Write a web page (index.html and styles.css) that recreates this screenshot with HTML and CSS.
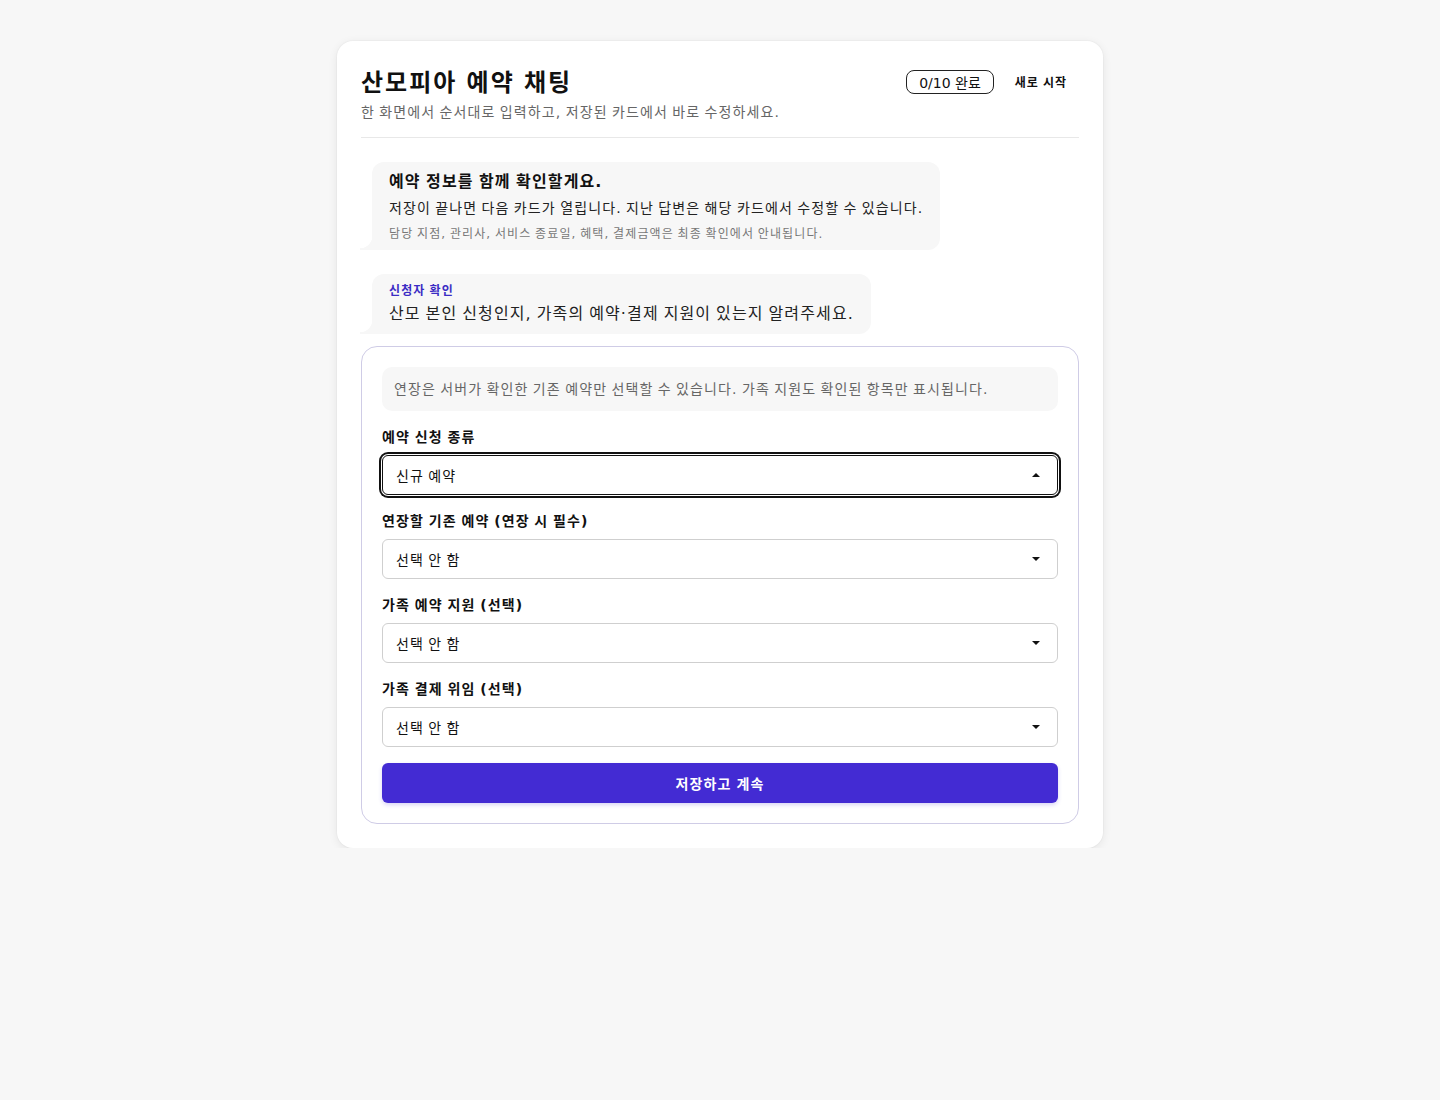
FILE: index.html
```html
<!DOCTYPE html>
<html>
<head>
<meta charset="utf-8">
<title>산모피아 예약 채팅</title>
<link rel="stylesheet" href="styles.css">
</head>
<body>
<main class="card">
  <header class="header">
    <div class="header-text">
      <h1 class="title">산모피아 예약 채팅</h1>
      <p class="subtitle">한 화면에서 순서대로 입력하고, 저장된 카드에서 바로 수정하세요.</p>
    </div>
    <div class="header-actions">
      <span class="pill">0/10 완료</span>
      <button class="reset">새로 시작</button>
    </div>
  </header>

  <section class="chat">
    <div class="bubble">
      <p class="bubble-title">예약 정보를 함께 확인할게요.</p>
      <p class="bubble-body">저장이 끝나면 다음 카드가 열립니다. 지난 답변은 해당 카드에서 수정할 수 있습니다.</p>
      <p class="bubble-note">담당 지점, 관리사, 서비스 종료일, 혜택, 결제금액은 최종 확인에서 안내됩니다.</p>
    </div>
    <div class="bubble">
      <p class="bubble-label">신청자 확인</p>
      <p class="bubble-question">산모 본인 신청인지, 가족의 예약·결제 지원이 있는지 알려주세요.</p>
    </div>

    <form class="form-card">
      <div class="info">연장은 서버가 확인한 기존 예약만 선택할 수 있습니다. 가족 지원도 확인된 항목만 표시됩니다.</div>
      <div class="field">
        <label class="label">예약 신청 종류</label>
        <div class="select focused"><span>신규 예약</span><i class="arrow up"></i></div>
      </div>
      <div class="field">
        <label class="label">연장할 기존 예약 (연장 시 필수)</label>
        <div class="select"><span>선택 안 함</span><i class="arrow"></i></div>
      </div>
      <div class="field">
        <label class="label">가족 예약 지원 (선택)</label>
        <div class="select"><span>선택 안 함</span><i class="arrow"></i></div>
      </div>
      <div class="field">
        <label class="label">가족 결제 위임 (선택)</label>
        <div class="select"><span>선택 안 함</span><i class="arrow"></i></div>
      </div>
      <button type="button" class="submit">저장하고 계속</button>
    </form>
  </section>
</main>
</body>
</html>
```

FILE: styles.css
```css
* { box-sizing: border-box; }
html, body { margin: 0; padding: 0; }
body {
  background: #f7f7f7;
  font-family: "DejaVu Sans", "Noto Sans CJK KR", sans-serif;
  letter-spacing: 0.07em;
  word-spacing: -0.08em;
  color: #111;
  padding-top: 41px;
}
p { margin: 0; }
.card {
  width: 766px;
  margin: 0 auto;
  background: #fff;
  border-radius: 16px;
  padding: 26px 24px 24px;
  box-shadow: 0 2px 10px rgba(0,0,0,0.08), 0 0 0 1px rgba(0,0,0,0.02);
}
.header {
  display: flex;
  justify-content: space-between;
  align-items: flex-start;
  padding-bottom: 15px;
  border-bottom: 1px solid #e8e8e8;
}
.title {
  margin: 0;
  font-size: 24px;
  line-height: 32px;
  font-weight: 600;
  letter-spacing: 0.085em;
  color: #111;
}
.subtitle {
  margin-top: 3px;
  font-size: 14px;
  line-height: 20px;
  color: #666;
}
.header-actions {
  display: flex;
  align-items: center;
  gap: 9px;
  margin-top: 2px;
}
.pill {
  display: inline-flex;
  align-items: center;
  height: 24px;
  padding: 0 12px;
  border: 1px solid #222;
  border-radius: 8px;
  font-size: 14px;
  letter-spacing: 0;
  word-spacing: 0;
  color: #111;
}
.reset {
  border: none;
  background: none;
  font-family: inherit;
  font-size: 12px;
  font-weight: 700;
  letter-spacing: 0.08em;
  word-spacing: -0.08em;
  color: #111;
  padding: 4px 12px;
  cursor: pointer;
}
.chat {
  padding-top: 24px;
  display: flex;
  flex-direction: column;
  align-items: flex-start;
}
.bubble {
  position: relative;
  margin-left: 11px;
  background: #f7f7f7;
  border-radius: 12px 12px 12px 0;
  padding: 9px 17px 7px 17px;
  margin-bottom: 24px;
}
.bubble::before {
  content: "";
  position: absolute;
  left: -12px;
  bottom: 0;
  width: 12px;
  height: 14px;
  background: radial-gradient(circle at 0 0, transparent 12px, #f7f7f7 12.5px);
}
.bubble + .bubble {
  margin-bottom: 12px;
  padding: 8px 17px 8px 17px;
}
.bubble-title {
  font-size: 16px;
  line-height: 22px;
  font-weight: 700;
  color: #111;
}
.bubble-body {
  margin-top: 4px;
  font-size: 14px;
  line-height: 22px;
  color: #222;
}
.bubble-note {
  margin-top: 6px;
  font-size: 12px;
  line-height: 18px;
  color: #777;
}
.bubble-label {
  font-size: 12px;
  line-height: 18px;
  font-weight: 700;
  color: #3b2cc4;
}
.bubble-question {
  margin-top: 2px;
  font-size: 16px;
  line-height: 24px;
  color: #222;
}
.form-card {
  align-self: stretch;
  border: 1px solid #cfcce6;
  border-radius: 16px;
  padding: 20px;
  display: flex;
  flex-direction: column;
  gap: 16px;
}
.info {
  background: #f7f7f7;
  border-radius: 10px;
  padding: 12px 12px;
  font-size: 14px;
  line-height: 20px;
  color: #666;
}
.field {
  display: flex;
  flex-direction: column;
  gap: 8px;
}
.label {
  font-size: 14px;
  line-height: 20px;
  font-weight: 700;
  color: #111;
}
.select {
  height: 40px;
  border: 1px solid #cfcfcf;
  border-radius: 6px;
  background: #fff;
  display: flex;
  align-items: center;
  justify-content: space-between;
  padding: 0 17px 0 13px;
  font-size: 14px;
  color: #111;
}
.select.focused {
  border: 1px solid #111;
  box-shadow: 0 0 0 1px #fff, 0 0 0 3px #111;
}
.arrow {
  width: 0;
  height: 0;
  border-left: 4px solid transparent;
  border-right: 4px solid transparent;
  border-top: 4px solid #111;
}
.arrow.up {
  border-top: none;
  border-bottom: 4px solid #111;
}
.submit {
  height: 40px;
  border: none;
  border-radius: 6px;
  background: #432bd3;
  color: #fff;
  font-family: inherit;
  font-size: 14px;
  font-weight: 700;
  letter-spacing: 0.08em;
  word-spacing: -0.08em;
  box-shadow: 0 2px 4px rgba(67,43,211,0.2);
  cursor: pointer;
}
```
